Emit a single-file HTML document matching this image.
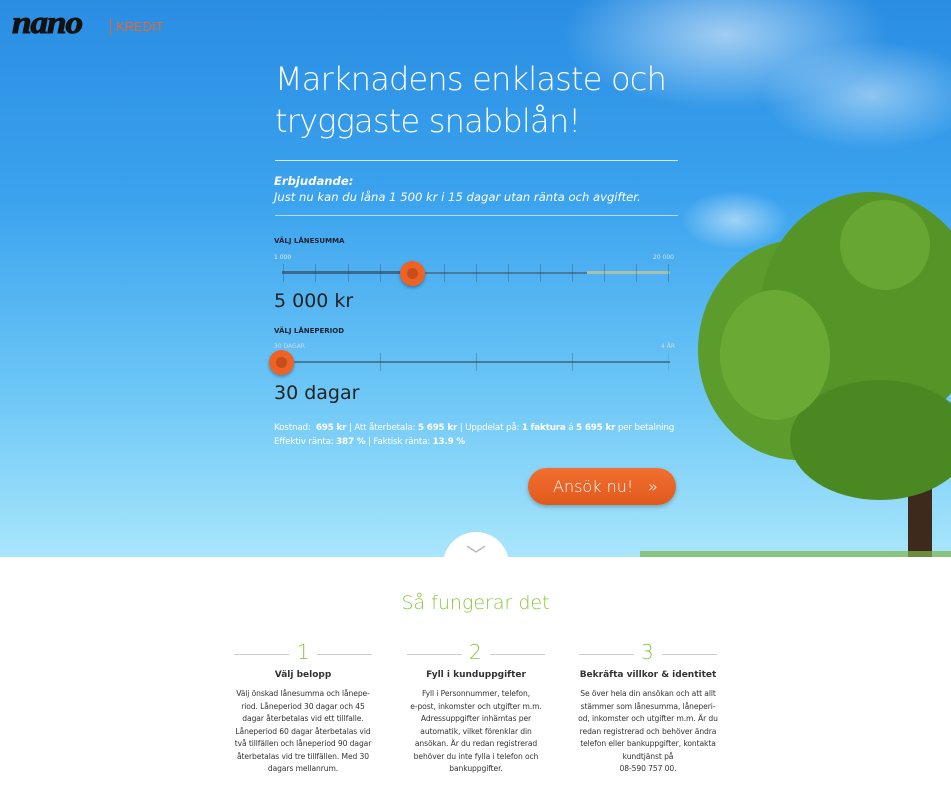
<!DOCTYPE html>
<html><head><meta charset="utf-8"><style>
*{margin:0;padding:0;box-sizing:border-box}
body{width:951px;height:789px;overflow:hidden;font-family:"DejaVu Sans","Liberation Sans",sans-serif;background:#fff;position:relative}
.hero{position:absolute;left:0;top:0;width:951px;height:557px;background:linear-gradient(180deg,#2a8de2 0%,#3aa2ee 35%,#6cc6f6 70%,#a9e6fc 100%);overflow:hidden}
.a{position:absolute}
.w{color:#fff}
.tick{position:absolute;width:1px;height:18px;background:rgba(40,70,100,.35)}
.col{font-size:7.6px;line-height:12.5px;letter-spacing:-.1px}
</style></head><body>
<div class="hero">
 <div class="a" style="left:560px;top:-40px;width:330px;height:150px;border-radius:50%;background:radial-gradient(ellipse,rgba(255,255,255,.55),rgba(255,255,255,0) 70%)"></div>
 <div class="a" style="left:760px;top:40px;width:220px;height:110px;border-radius:50%;background:radial-gradient(ellipse,rgba(255,255,255,.45),rgba(255,255,255,0) 70%)"></div>
 <div class="a" style="left:680px;top:190px;width:110px;height:60px;border-radius:50%;background:radial-gradient(ellipse,rgba(255,255,255,.5),rgba(255,255,255,0) 70%)"></div>
 <!-- tree -->
 <div class="a" style="left:908px;top:420px;width:24px;height:137px;background:#3e2a1c;border-radius:6px 6px 0 0"></div>
 <div class="a" style="left:698px;top:240px;width:200px;height:220px;border-radius:50%;background:#5c9c2c"></div>
 <div class="a" style="left:760px;top:192px;width:220px;height:240px;border-radius:50%;background:#559528"></div>
 <div class="a" style="left:790px;top:380px;width:180px;height:120px;border-radius:50%;background:#4a8822"></div>
 <div class="a" style="left:720px;top:290px;width:110px;height:130px;border-radius:50%;background:#6aaa34"></div>
 <div class="a" style="left:840px;top:200px;width:90px;height:90px;border-radius:50%;background:#67a632"></div>
 <div class="a" style="left:640px;top:551px;width:311px;height:6px;background:#7bb84a;opacity:.7"></div>

 <div class="a" style="left:12px;top:4px;font:italic bold 32px 'Liberation Serif',serif;color:#111;letter-spacing:-1px;transform:scaleX(1.1);transform-origin:left;-webkit-text-stroke:1px #111">nano</div>
 <div class="a" style="left:110px;top:18px;width:1px;height:18px;background:#d86a2a"></div>
 <div class="a" style="left:116px;top:19px;font:13px 'Liberation Sans',sans-serif;color:#e8682a">KREDIT</div>

 <div class="a w" style="left:275px;top:58px;font-size:32px;line-height:42px;font-weight:200;letter-spacing:-.8px">Marknadens enklaste och<br>tryggaste snabblån!</div>
 <div class="a" style="left:275px;top:160px;width:403px;height:1px;background:rgba(255,255,255,.8)"></div>
 <div class="a w" style="left:274px;top:173px;font-size:11.6px;line-height:16px;font-style:italic"><b>Erbjudande:</b><br>Just nu kan du låna 1 500 kr i 15 dagar utan ränta och avgifter.</div>
 <div class="a" style="left:275px;top:215px;width:403px;height:1px;background:rgba(255,255,255,.6)"></div>

 <div class="a" style="left:274px;top:237px;font-size:7px;font-weight:bold;color:#223">VÄLJ LÅNESUMMA</div>
 <div class="a" style="left:274px;top:254px;font-size:6px;color:#e0eefa">1 000</div>
 <div class="a" style="left:653px;top:254px;font-size:6px;color:#d0e4f4">20 000</div>
 <div class="a" style="left:282px;top:271px;width:130px;height:3px;background:#3c6a8c"></div>
 <div class="a" style="left:412px;top:272px;width:175px;height:2px;background:#4a7a9a"></div>
 <div class="a" style="left:587px;top:271px;width:83px;height:3px;background:#a8c0b0"></div>
 <div class="tick" style="left:283px;top:264px"></div><div class="tick" style="left:315px;top:264px"></div><div class="tick" style="left:348px;top:264px"></div><div class="tick" style="left:380px;top:264px"></div><div class="tick" style="left:444px;top:264px"></div><div class="tick" style="left:476px;top:264px"></div><div class="tick" style="left:508px;top:264px"></div><div class="tick" style="left:540px;top:264px"></div><div class="tick" style="left:572px;top:264px"></div><div class="tick" style="left:604px;top:264px"></div><div class="tick" style="left:636px;top:264px"></div><div class="tick" style="left:668px;top:264px"></div>
 <div class="a" style="left:400px;top:261px;width:25px;height:25px;border-radius:50%;background:#ef6224;box-shadow:0 2px 3px rgba(0,0,0,.3)"><div style="margin:7px;width:11px;height:11px;border-radius:50%;background:#c44f1c"></div></div>
 <div class="a" style="left:274px;top:290px;font-size:19px;color:#222">5 000 kr</div>

 <div class="a" style="left:274px;top:327px;font-size:7px;font-weight:bold;color:#223">VÄLJ LÅNEPERIOD</div>
 <div class="a" style="left:274px;top:343px;font-size:6px;color:#c8dcec">30 DAGAR</div>
 <div class="a" style="left:661px;top:343px;font-size:6px;color:#c8dcec">4 ÅR</div>
 <div class="a" style="left:282px;top:361px;width:388px;height:2px;background:#4a7a9a"></div>
 <div class="tick" style="left:380px;top:353px"></div><div class="tick" style="left:476px;top:353px"></div><div class="tick" style="left:572px;top:353px"></div><div class="tick" style="left:668px;top:353px;opacity:.4"></div>
 <div class="a" style="left:269px;top:350px;width:25px;height:25px;border-radius:50%;background:#ef6224;box-shadow:0 2px 3px rgba(0,0,0,.3)"><div style="margin:7px;width:11px;height:11px;border-radius:50%;background:#c44f1c"></div></div>
 <div class="a" style="left:274px;top:382px;font-size:19px;color:#222">30 dagar</div>

 <div class="a w" style="left:274px;top:421px;font-size:8.8px;line-height:14px;white-space:nowrap;letter-spacing:-.2px">Kostnad:&nbsp; <b>695 kr</b> | Att återbetala: <b>5 695 kr</b> | Uppdelat på: <b>1 faktura</b> á <b>5 695 kr</b> per betalning<br>Effektiv ränta: <b>387 %</b> | Faktisk ränta: <b>13.9 %</b></div>

 <div class="a w" style="left:528px;top:468px;width:148px;height:37px;border-radius:19px;background:linear-gradient(#f26f30,#e05a1c);box-shadow:0 2px 4px rgba(0,0,0,.25);font-size:16px;font-weight:300;line-height:37px;padding-left:25px">Ansök nu! <span style="position:absolute;left:120px;font-size:16px">»</span></div>

 <div class="a" style="left:443px;top:532px;width:66px;height:66px;border-radius:50%;background:#fff"></div>
 <svg class="a" style="left:466px;top:545px" width="20" height="10"><path d="M1 1 L10 7 L19 1" fill="none" stroke="#bbb" stroke-width="1.5"/></svg>
</div>

<div class="a" style="left:0;top:592px;width:951px;text-align:center;font-size:19px;color:#8cc63e;font-weight:200">Så fungerar det</div>

<div class="a" style="left:234px;top:640px;width:138px">
 <div style="position:absolute;left:0;top:14px;width:55px;height:1px;background:#ccc"></div><div style="position:absolute;left:63px;top:0;font-size:20px;color:#8cc63e;font-weight:200">1</div><div style="position:absolute;left:83px;top:14px;width:55px;height:1px;background:#ccc"></div>
</div>
<div class="a" style="left:407px;top:640px;width:138px">
 <div style="position:absolute;left:0;top:14px;width:55px;height:1px;background:#ccc"></div><div style="position:absolute;left:62px;top:0;font-size:20px;color:#8cc63e;font-weight:200">2</div><div style="position:absolute;left:83px;top:14px;width:55px;height:1px;background:#ccc"></div>
</div>
<div class="a" style="left:579px;top:640px;width:138px">
 <div style="position:absolute;left:0;top:14px;width:55px;height:1px;background:#ccc"></div><div style="position:absolute;left:62px;top:0;font-size:20px;color:#8cc63e;font-weight:200">3</div><div style="position:absolute;left:83px;top:14px;width:55px;height:1px;background:#ccc"></div>
</div>

<div class="a" style="left:233px;top:670px;width:140px;text-align:center;color:#333">
 <div style="font-size:9px;font-weight:bold;margin-bottom:8px">Välj belopp</div>
 <div class="col">Välj önskad lånesumma och lånepe-riod. Låneperiod 30 dagar och 45 dagar återbetalas vid ett tillfalle. Låneperiod 60 dagar återbetalas vid två tillfällen och låneperiod 90 dagar återbetalas vid tre tillfällen. Med 30 dagars mellanrum.</div>
</div>
<div class="a" style="left:404px;top:670px;width:144px;text-align:center;color:#333">
 <div style="font-size:9px;font-weight:bold;margin-bottom:8px">Fyll i kunduppgifter</div>
 <div class="col">Fyll i Personnummer, telefon,<br>e-post, inkomster och utgifter m.m. Adressuppgifter inhämtas per automatik, vilket förenklar din ansökan. Är du redan registrerad behöver du inte fylla i telefon och bankuppgifter.</div>
</div>
<div class="a" style="left:577px;top:670px;width:142px;text-align:center;color:#333">
 <div style="font-size:9px;font-weight:bold;margin-bottom:8px;white-space:nowrap;margin-left:-10px;margin-right:-10px">Bekräfta villkor &amp; identitet</div>
 <div class="col">Se över hela din ansökan och att allt stämmer som lånesumma, låneperi-od, inkomster och utgifter m.m. Är du redan registrerad och behöver ändra telefon eller bankuppgifter, kontakta kundtjänst på<br>08-590 757 00.</div>
</div>
</body></html>
